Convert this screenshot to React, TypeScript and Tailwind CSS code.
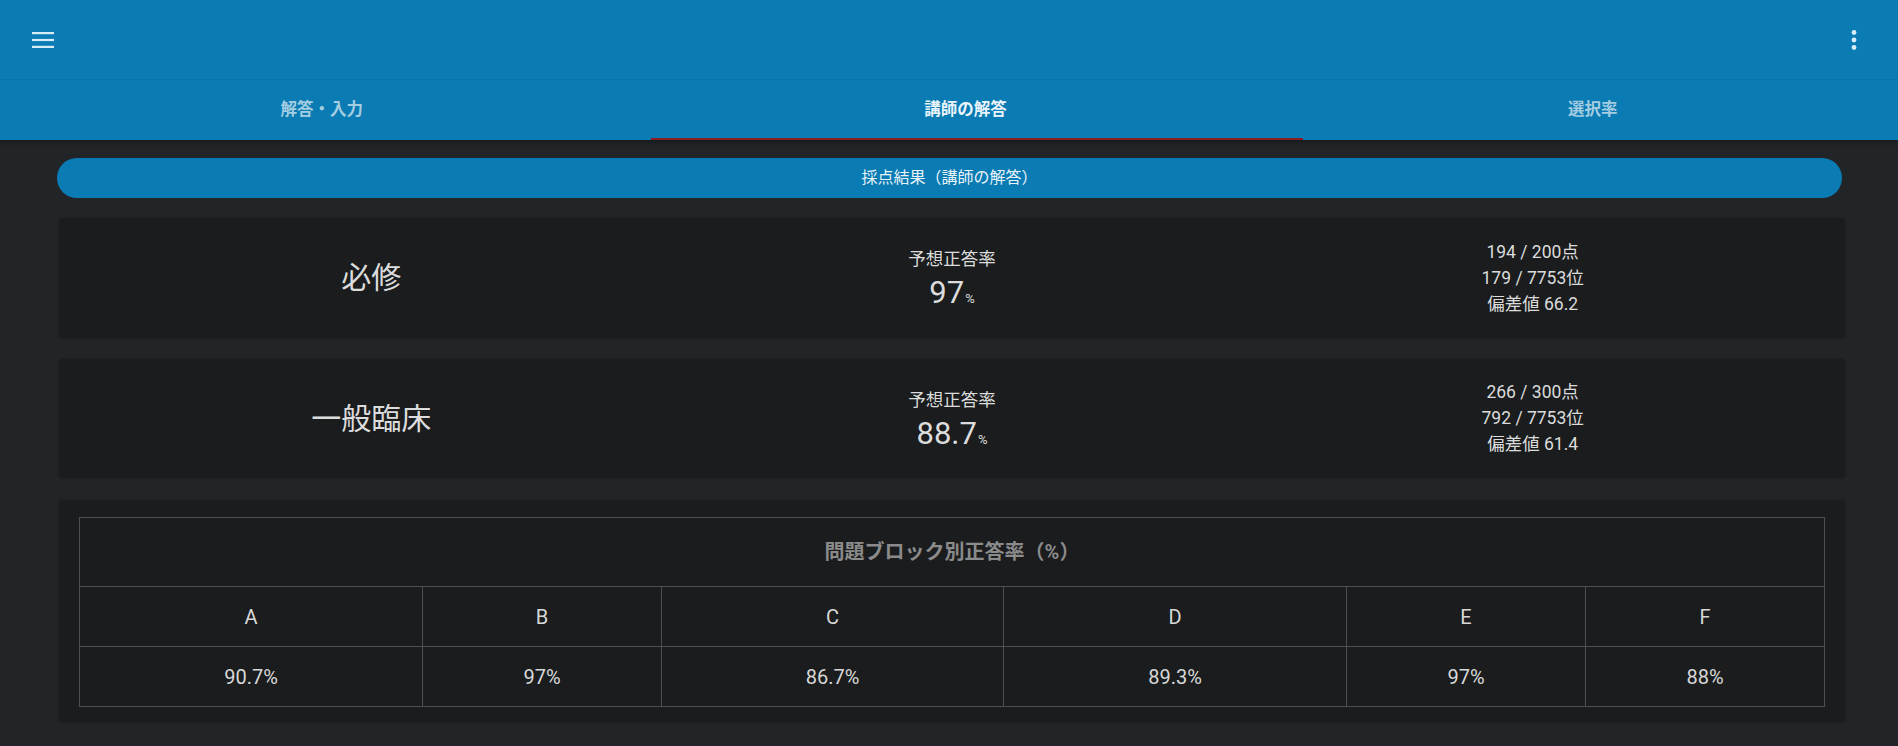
import React from "react";

type Score = {
  name: string;
  rate: string;
  points: string;
  rank: string;
  dev: string;
};

const scores: Score[] = [
  { name: "必修", rate: "97", points: "194 / 200点", rank: "179 / 7753位", dev: "偏差値 66.2" },
  { name: "一般臨床", rate: "88.7", points: "266 / 300点", rank: "792 / 7753位", dev: "偏差値 61.4" },
];

const blocks = [
  { label: "A", value: "90.7%" },
  { label: "B", value: "97%" },
  { label: "C", value: "86.7%" },
  { label: "D", value: "89.3%" },
  { label: "E", value: "97%" },
  { label: "F", value: "88%" },
];

const tabs = ["解答・入力", "講師の解答", "選択率"];

function Header() {
  return (
    <header className="bg-[#0a7bb3] shadow-[0_2px_4px_rgba(0,0,0,0.35)]">
      {/* top bar */}
      <div className="h-[80px] flex items-center justify-between pl-[32px] pr-[41px] border-b border-[#0873a9]">
        <svg width="22" height="16" viewBox="0 0 22 16" fill="#d6edf8">
          <rect x="0" y="0" width="22" height="2.2" />
          <rect x="0" y="6.9" width="22" height="2.2" />
          <rect x="0" y="13.8" width="22" height="2.2" />
        </svg>
        <svg width="6" height="20" viewBox="0 0 6 20" fill="#d6edf8">
          <circle cx="3" cy="2.5" r="2.4" />
          <circle cx="3" cy="10" r="2.4" />
          <circle cx="3" cy="17.5" r="2.4" />
        </svg>
      </div>

      {/* tabs */}
      <nav className="relative flex h-[60px]">
        {tabs.map((t, i) => (
          <button
            key={t}
            className={`flex-auto px-4 text-[16.5px] font-bold ${
              i === 1 ? "text-[#eaf5fb]" : "text-[#a4cde2]"
            }`}
          >
            {t}
          </button>
        ))}
        <span className="absolute bottom-0 left-[651px] h-[2px] w-[652px] bg-[#8c1d24]" />
      </nav>
    </header>
  );
}

function ScoreCard({ s, className }: { s: Score; className: string }) {
  return (
    <div
      className={`ml-[59px] mr-[53px] grid grid-cols-3 items-center rounded bg-[#1a1c1e] px-[22px] text-[#dcdcdc] shadow-[0_1px_3px_rgba(0,0,0,0.3)] ${className}`}
    >
      <div className="text-center text-[30px]">{s.name}</div>
      <div className="flex flex-col items-center self-stretch pt-[30px]">
        <span className="text-[17.5px] leading-[22px]">予想正答率</span>
        <span className="mt-[5px] text-[31px] leading-[36px]">
          {s.rate}
          <span className="text-[13px] ml-[1px]">%</span>
        </span>
      </div>
      <div className="flex flex-col items-center text-[17.5px] leading-[26px]">
        <span>{s.points}</span>
        <span>{s.rank}</span>
        <span>{s.dev}</span>
      </div>
    </div>
  );
}

export default function App() {
  return (
    <div className="min-h-[746px] bg-[#212527] font-['Roboto','Noto_Sans_CJK_JP',sans-serif] pb-6">
      <Header />

      <main className="pt-[18px]">
        <div className="ml-[57px] mr-[56px] flex h-10 items-center justify-center rounded-full bg-[#0a7bb3] text-[16px] text-[#e8f3f9]">
          採点結果（講師の解答）
        </div>

        <ScoreCard s={scores[0]} className="mt-5 h-[119px]" />
        <ScoreCard s={scores[1]} className="mt-[22px] h-[118px]" />

        {/* block table */}
        <div className="mt-[23px] ml-[59px] mr-[53px] rounded bg-[#1a1c1e] px-5 pt-[17px] pb-[14px] shadow-[0_1px_3px_rgba(0,0,0,0.3)]">
          <div className="border border-[#4e4f50]">
            <div className="flex h-[69px] items-center justify-center border-b border-[#4e4f50] text-[20px] font-bold text-[#8b8b8b]">
              問題ブロック別正答率（%）
            </div>
            <div className="grid grid-cols-[343px_239px_342px_343px_239px_1fr] text-[20px] text-[#d8d8d8]">
              {blocks.map((b, i) => (
                <div
                  key={b.label}
                  className={`flex h-[60px] items-center justify-center border-b border-[#4e4f50] ${
                    i < blocks.length - 1 ? "border-r" : ""
                  }`}
                >
                  {b.label}
                </div>
              ))}
              {blocks.map((b, i) => (
                <div
                  key={b.label + "v"}
                  className={`flex h-[59px] items-center justify-center border-[#4e4f50] ${
                    i < blocks.length - 1 ? "border-r" : ""
                  }`}
                >
                  {b.value}
                </div>
              ))}
            </div>
          </div>
        </div>
      </main>
    </div>
  );
}
